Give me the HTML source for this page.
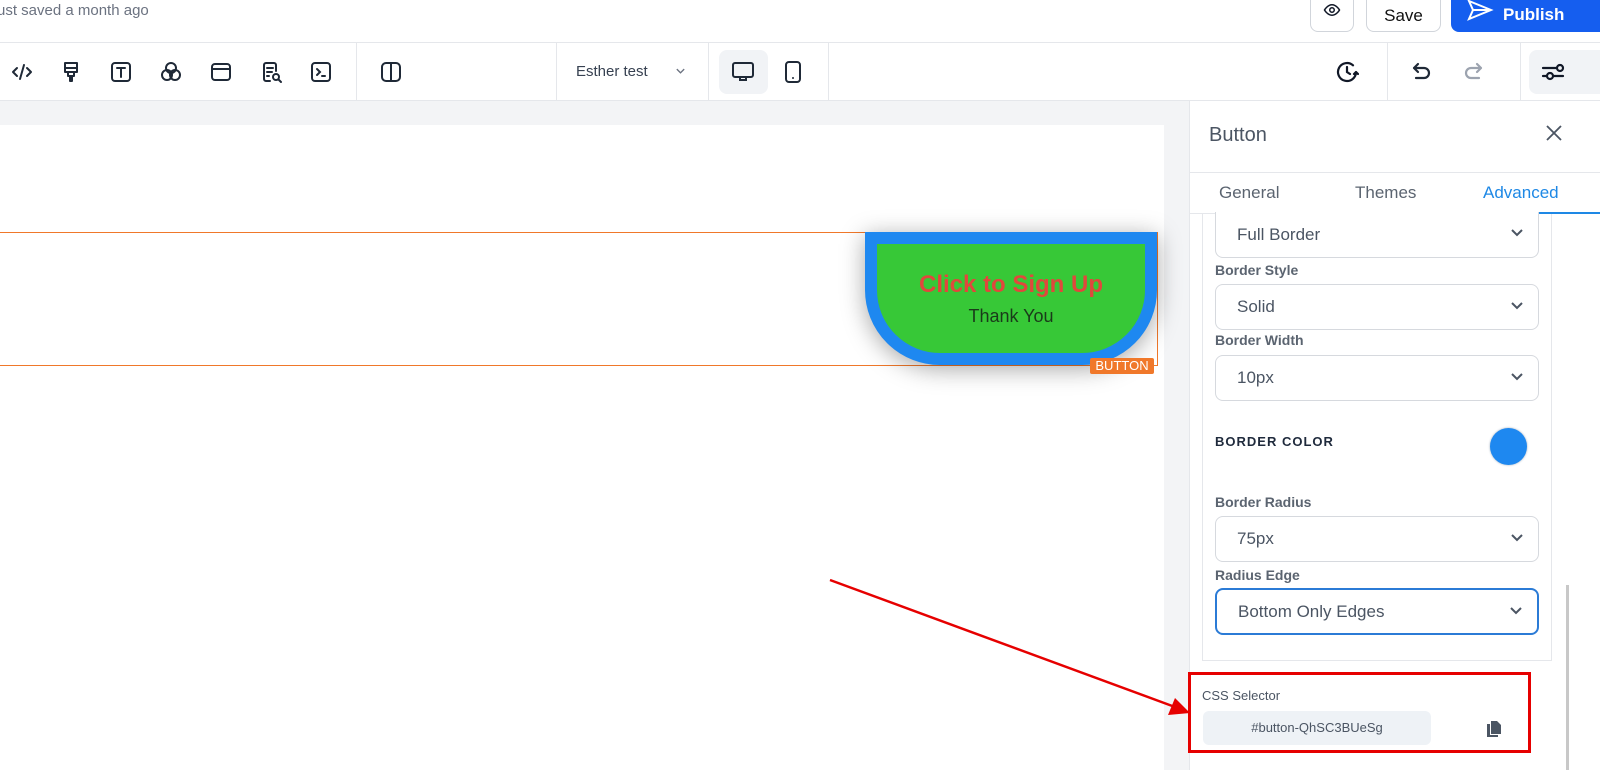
<!DOCTYPE html>
<html><head><meta charset="utf-8">
<style>
*{box-sizing:border-box;margin:0;padding:0}
body{width:1600px;height:770px;overflow:hidden;background:#fff;font-family:"Liberation Sans",sans-serif;position:relative}
.a{position:absolute}
.ic{position:absolute;top:60px;width:24px;height:24px}
.sel{position:absolute;left:1215px;width:324px;height:46px;border:1px solid #d6d9de;border-radius:8px;font-size:17px;color:#4b5563;padding:12px 0 0 21px;background:#fff}
.sel svg{position:absolute;right:14px;top:16px}
.lbl{position:absolute;left:1215px;font-size:14px;font-weight:bold;color:#5b6470}
</style></head><body>
<!-- top bar -->
<div class="a" style="left:-3px;top:2px;font-size:15px;color:#6b7280">ust saved a month ago</div>
<div class="a" style="left:1310px;top:-10px;width:44px;height:42px;border:1px solid #d1d5db;border-radius:8px"></div>
<svg class="a" style="left:1322px;top:1px" width="20" height="18" viewBox="0 0 24 24" fill="none" stroke="#111827" stroke-width="2"><path d="M2 12s4-7 10-7 10 7 10 7-4 7-10 7S2 12 2 12z"/><circle cx="12" cy="12" r="3"/></svg>
<div class="a" style="left:1366px;top:-10px;width:75px;height:42px;border:1px solid #d1d5db;border-radius:8px;font-size:17px;color:#111;display:flex;align-items:center;justify-content:center;padding-top:10px">Save</div>
<div class="a" style="left:1451px;top:-10px;width:160px;height:42px;background:#155eef;border-radius:8px;color:#fff;font-size:17px;font-weight:bold;display:flex;align-items:center;padding:8px 0 0 52px">Publish</div>
<svg class="a" style="left:1466px;top:-2px" width="28" height="24" viewBox="0 0 28 24" fill="none" stroke="#fff" stroke-width="2"><path d="M3 3l22 9-22 9 4-9z M7 12h18"/></svg>
<div class="a" style="left:0;top:42px;width:1600px;height:1px;background:#e5e7eb"></div>
<!-- toolbar -->
<svg class="ic" style="left:10px" viewBox="0 0 24 24" fill="none" stroke="#1f2937" stroke-width="2" stroke-linecap="round" stroke-linejoin="round"><path d="M7 8l-4 4 4 4M17 8l4 4-4 4M14 5l-4 14"/></svg>
<svg class="ic" style="left:59px" viewBox="0 0 24 24" fill="none" stroke="#1f2937" stroke-width="2" stroke-linejoin="round"><path d="M6 3h12v9H6z M6 8h12 M9 12v4h6v-4 M11 16v5h2v-5"/></svg>
<svg class="ic" style="left:109px" viewBox="0 0 24 24" fill="none" stroke="#1f2937" stroke-width="2" stroke-linecap="round"><rect x="3" y="3" width="18" height="18" rx="3"/><path d="M8 8h8M12 8v9"/></svg>
<svg class="ic" style="left:159px" viewBox="0 0 24 24" fill="none" stroke="#1f2937" stroke-width="2"><circle cx="12" cy="8" r="5"/><circle cx="8" cy="15" r="5"/><circle cx="16" cy="15" r="5"/></svg>
<svg class="ic" style="left:209px" viewBox="0 0 24 24" fill="none" stroke="#1f2937" stroke-width="2"><rect x="3" y="4" width="18" height="16" rx="3"/><path d="M3 9h18"/></svg>
<svg class="ic" style="left:259px" viewBox="0 0 24 24" fill="none" stroke="#1f2937" stroke-width="2" stroke-linecap="round"><path d="M11 21H7a2 2 0 0 1-2-2V5a2 2 0 0 1 2-2h8a2 2 0 0 1 2 2v6 M8 8h6M8 12h5M8 16h2"/><circle cx="17" cy="17" r="3"/><path d="M19.5 19.5L22 22"/></svg>
<svg class="ic" style="left:309px" viewBox="0 0 24 24" fill="none" stroke="#1f2937" stroke-width="2" stroke-linecap="round"><rect x="3" y="3" width="18" height="18" rx="3"/><path d="M8 9l3 3-3 3M13 16h3"/></svg>
<div class="a" style="left:356px;top:43px;width:1px;height:57px;background:#e5e7eb"></div>
<svg class="ic" style="left:379px" viewBox="0 0 24 24" fill="none" stroke="#1f2937" stroke-width="2"><rect x="3" y="3" width="18" height="18" rx="4"/><path d="M12 3v18"/></svg>
<div class="a" style="left:556px;top:43px;width:1px;height:57px;background:#e5e7eb"></div>
<div class="a" style="left:576px;top:63px;font-size:15px;color:#374151">Esther test</div>
<svg class="a" style="left:675px;top:67px" width="11" height="8" viewBox="0 0 12 8" fill="none" stroke="#6b7280" stroke-width="1.5"><path d="M2 2l4 4 4-4"/></svg>
<div class="a" style="left:708px;top:43px;width:1px;height:57px;background:#e5e7eb"></div>
<div class="a" style="left:719px;top:50px;width:49px;height:44px;background:#f1f3f6;border-radius:8px"></div>
<svg class="ic" style="left:731px" viewBox="0 0 24 24" fill="none" stroke="#1f2937" stroke-width="2"><rect x="2" y="3" width="20" height="14" rx="2"/><path d="M9 17v3h6v-3"/></svg>
<svg class="ic" style="left:781px" viewBox="0 0 24 24" fill="none" stroke="#1f2937" stroke-width="2" stroke-linecap="round"><rect x="5" y="2" width="14" height="20" rx="3"/><path d="M12 18h.01"/></svg>
<div class="a" style="left:828px;top:43px;width:1px;height:57px;background:#e5e7eb"></div>
<svg class="ic" style="left:1335px" viewBox="0 0 24 24" fill="none" stroke="#111827" stroke-width="2.2" stroke-linecap="round"><path d="M21 12a9 9 0 1 1-3-6.7 M12 7v5l3 2 M21 12l-2 2 M21 12l2 2"/></svg>
<div class="a" style="left:1387px;top:43px;width:1px;height:57px;background:#e5e7eb"></div>
<svg class="ic" style="left:1410px" viewBox="0 0 24 24" fill="none" stroke="#1f2937" stroke-width="2.2" stroke-linecap="round" stroke-linejoin="round"><path d="M8 4L4 8l4 4 M4 8h10a5 5 0 0 1 0 10H6"/></svg>
<svg class="ic" style="left:1461px" viewBox="0 0 24 24" fill="none" stroke="#9ca3af" stroke-width="2.2" stroke-linecap="round" stroke-linejoin="round"><path d="M16 4l4 4-4 4 M20 8H10a5 5 0 0 0 0 10h8"/></svg>
<div class="a" style="left:1520px;top:43px;width:1px;height:57px;background:#e5e7eb"></div>
<div class="a" style="left:1529px;top:50px;width:80px;height:44px;background:#f1f3f6;border-radius:8px"></div>
<svg class="ic" style="left:1541px" viewBox="0 0 24 24" fill="none" stroke="#111827" stroke-width="2.2" stroke-linecap="round"><path d="M2 8h13M2 16h4M13 16h9"/><circle cx="19" cy="8" r="3"/><circle cx="9" cy="16" r="3"/></svg>
<div class="a" style="left:0;top:100px;width:1600px;height:1px;background:#e5e7eb"></div>
<!-- canvas -->
<div class="a" style="left:0;top:101px;width:1189px;height:669px;background:#f3f4f6"></div>
<div class="a" style="left:0;top:125px;width:1164px;height:645px;background:#fff"></div>
<div class="a" style="left:0;top:232px;width:1158px;height:134px;border:1px solid #f0782a;border-left:none"></div>
<div class="a" style="left:865px;top:232px;width:292px;height:133px;background:#37c837;border:12px solid #1e88f0;border-radius:0 0 75px 75px;box-shadow:0 4px 24px rgba(0,0,0,.35);text-align:center">
<div style="font-size:24px;font-weight:bold;color:#e0483c;margin-top:27px">Click to Sign Up</div>
<div style="font-size:18px;color:#1a3a1a;margin-top:7px">Thank You</div></div>
<div class="a" style="left:1090px;top:358px;width:64px;height:16px;background:#f0782a;color:#fff;font-size:13px;text-align:center;line-height:16px;border-radius:2px">BUTTON</div>
<!-- panel -->
<div class="a" style="left:1189px;top:101px;width:411px;height:669px;background:#fff;border-left:1px solid #e5e7eb"></div>
<div class="a" style="left:1209px;top:124px;font-size:20px;color:#4b5563">Button</div>
<svg class="a" style="left:1545px;top:124px" width="18" height="18" viewBox="0 0 18 18" stroke="#4b5563" stroke-width="1.8"><path d="M2 2l14 14M16 2L2 16"/></svg>
<div class="a" style="left:1189px;top:172px;width:411px;height:1px;background:#e5e7eb"></div>
<div class="a" style="left:1219px;top:183px;font-size:17px;color:#5b6470">General</div>
<div class="a" style="left:1355px;top:183px;font-size:17px;color:#5b6470">Themes</div>
<div class="a" style="left:1483px;top:183px;font-size:17px;color:#1e88e5">Advanced</div>
<div class="a" style="left:1189px;top:213px;width:411px;height:1px;background:#e5e7eb"></div>
<div class="a" style="left:1482px;top:212px;width:118px;height:2px;background:#1e88e5"></div>
<div class="a" style="left:1202px;top:214px;width:350px;height:447px;border:1px solid #e5e7eb;border-top:none"></div>
<div class="a" style="left:1566px;top:585px;width:3px;height:185px;background:#c8c8c8"></div>
<div class="sel" style="top:212px;border-top:none;border-radius:0 0 8px 8px;padding-top:13px">Full Border<svg width="14" height="9" viewBox="0 0 14 9" fill="none" stroke="#4b5563" stroke-width="2"><path d="M2 2l5 5 5-5"/></svg></div>
<div class="lbl" style="top:262px">Border Style</div>
<div class="sel" style="top:284px">Solid<svg width="14" height="9" viewBox="0 0 14 9" fill="none" stroke="#4b5563" stroke-width="2"><path d="M2 2l5 5 5-5"/></svg></div>
<div class="lbl" style="top:332px">Border Width</div>
<div class="sel" style="top:355px">10px<svg width="14" height="9" viewBox="0 0 14 9" fill="none" stroke="#4b5563" stroke-width="2"><path d="M2 2l5 5 5-5"/></svg></div>
<div class="a" style="left:1215px;top:434px;font-size:13px;font-weight:bold;color:#1f2a3c;letter-spacing:1px">BORDER COLOR</div>
<div class="a" style="left:1490px;top:428px;width:37px;height:37px;border-radius:50%;background:#1e88f0;box-shadow:0 0 2px #9ab"></div>
<div class="lbl" style="top:494px">Border Radius</div>
<div class="sel" style="top:516px">75px<svg width="14" height="9" viewBox="0 0 14 9" fill="none" stroke="#4b5563" stroke-width="2"><path d="M2 2l5 5 5-5"/></svg></div>
<div class="lbl" style="top:567px">Radius Edge</div>
<div class="sel" style="top:588px;height:47px;border:2px solid #2b7bd6">Bottom Only Edges<svg width="14" height="9" viewBox="0 0 14 9" fill="none" stroke="#4b5563" stroke-width="2"><path d="M2 2l5 5 5-5"/></svg></div>
<div class="a" style="left:1202px;top:688px;font-size:13px;color:#4b5563">CSS Selector</div>
<div class="a" style="left:1203px;top:711px;width:228px;height:34px;background:#eef2f6;border-radius:6px;font-size:13px;color:#4b5563;text-align:center;line-height:34px">#button-QhSC3BUeSg</div>
<svg class="a" style="left:1487px;top:721px" width="14" height="16" viewBox="0 0 14 16"><path d="M4 0h6l4 4v9H4z" fill="#4b5563"/><path d="M0 3h3v11h8v2H0z" fill="#4b5563"/></svg>
<!-- annotation -->
<div class="a" style="left:1188px;top:672px;width:343px;height:81px;border:3px solid #e60000"></div>
<svg class="a" style="left:0;top:0" width="1600" height="770"><line x1="830" y1="580" x2="1175" y2="707" stroke="#e60000" stroke-width="2.5"/><path d="M1190 713l-22 2 7-17z" fill="#e60000"/></svg>
</body></html>
